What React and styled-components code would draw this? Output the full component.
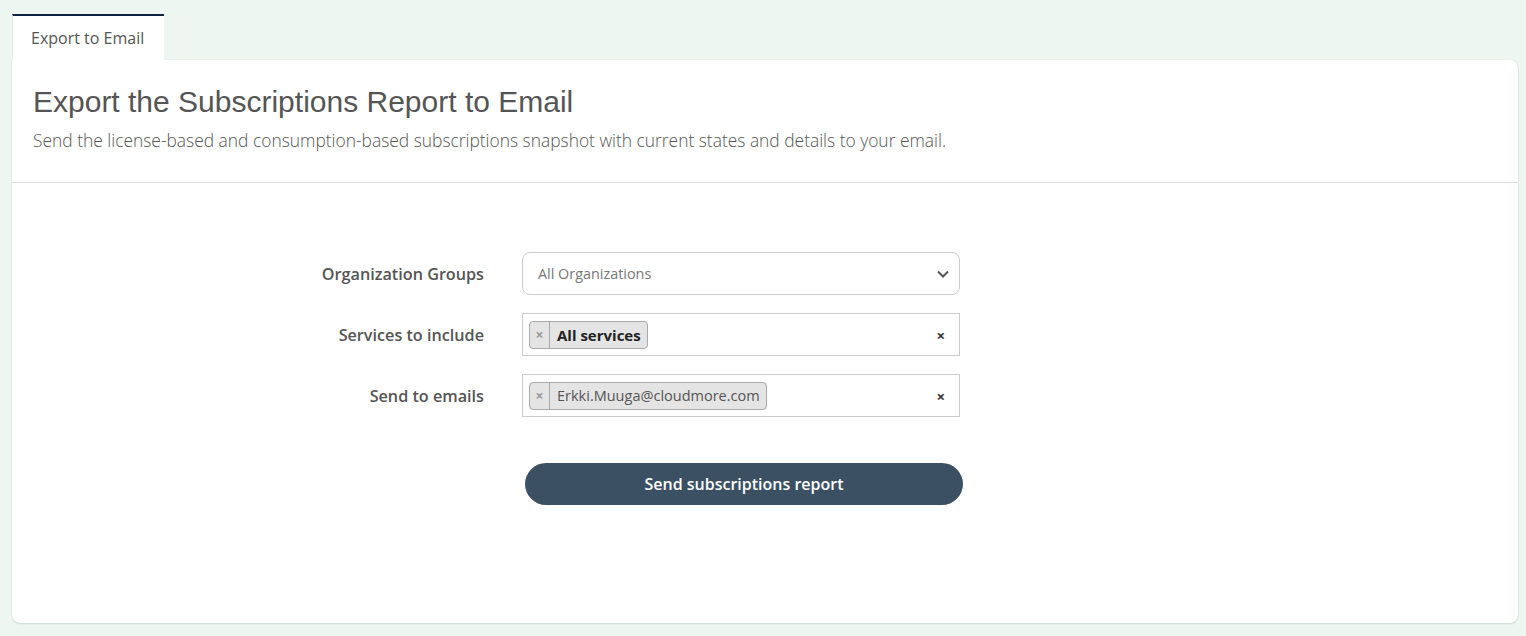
import React from 'react';
import styled, {createGlobalStyle} from 'styled-components';

const GlobalStyle = createGlobalStyle`
  html, body {
    margin: 0;
    padding: 0;
    background: #eef6f2;
    font-family: "Open Sans", "Liberation Sans", sans-serif;
    color: #555;
  }
`;

const Page = styled.div`
  padding: 14px 8px 12px 12px;
`;

const TabBar = styled.div`
  display: flex;
`;

const Tab = styled.div`
  background: #fff;
  border-top: 2px solid #0f2340;
  border-left: 1px solid #eee;
  padding: 11px 20px 11px 18px;
  font-size: 16px;
  line-height: 22px;
  color: #555;
`;

const Card = styled.div`
  background: #fff;
  border-radius: 0 8px 8px 8px;
  box-shadow: 0 1px 2px rgba(0, 0, 0, 0.12), 0 0 1px rgba(0, 0, 0, 0.12);
  height: 563px;
  display: flex;
  flex-direction: column;
`;

const Header = styled.div`
  padding: 24px 21px 30px;
  border-bottom: 1px solid #ddd;
`;

const Title = styled.h1`
  margin: 0;
  font-family: "Liberation Sans", Arial, sans-serif;
  font-weight: 400;
  font-size: 30px;
  line-height: 36px;
  color: #555;
`;

const Subtitle = styled.p`
  margin: 8px 0 0;
  font-weight: 300;
  font-size: 17.4px;
  line-height: 24px;
  color: #555;
`;

const Form = styled.div`
  padding-top: 69px;
  display: grid;
  grid-template-columns: 472px 438px;
  column-gap: 38px;
  row-gap: 18px;
  align-items: center;
`;

const Label = styled.label`
  text-align: right;
  font-weight: 600;
  font-size: 16.2px;
  color: #555;
`;

const Select = styled.div`
  height: 43px;
  box-sizing: border-box;
  border: 1px solid #ccc;
  border-radius: 8px;
  display: flex;
  align-items: center;
  justify-content: space-between;
  padding: 0 9px 0 15px;
  font-size: 14.4px;
  color: #777;
`;

const MultiBox = styled.div`
  height: 43px;
  box-sizing: border-box;
  border: 1px solid #ccc;
  display: flex;
  align-items: center;
  padding: 0 14px 0 6px;
`;

const Tag = styled.span`
  display: inline-flex;
  align-items: stretch;
  height: 28px;
  box-sizing: border-box;
  background: #e4e4e4;
  border: 1px solid #aaa;
  border-radius: 4px;
`;

const TagRemove = styled.span`
  width: 19px;
  border-right: 1px solid #aaa;
  display: flex;
  align-items: center;
  justify-content: center;
  color: #999;
  font-size: 14px;
  font-weight: 700;
`;

const TagText = styled.span`
  display: flex;
  align-items: center;
  padding: 0 6px 0 7px;
  font-size: ${p => (p.$bold ? '15px' : '14.5px')};
  font-weight: ${p => (p.$bold ? 700 : 400)};
  color: ${p => (p.$bold ? '#222' : '#555')};
`;

const ClearAll = styled.span`
  margin-left: auto;
  font-size: 15px;
  font-weight: 700;
  color: #333;
`;

const SubmitButton = styled.button`
  grid-column: 2;
  justify-self: start;
  width: 438px;
  margin: 28px 0 0 3px;
  height: 42px;
  border: none;
  border-radius: 21px;
  background: #3c5064;
  color: #fff;
  font-family: "Open Sans", "Liberation Sans", sans-serif;
  font-weight: 600;
  font-size: 16px;
  cursor: pointer;
`;

const Chevron = () => (
  <svg width="14" height="14" viewBox="0 0 14 14">
    <path d="M2 4.5 L7 9.5 L12 4.5" fill="none" stroke="#555" strokeWidth="2" />
  </svg>
);

const App = () => (
  <>
    <GlobalStyle />
    <Page>
      <TabBar>
        <Tab>Export to Email</Tab>
      </TabBar>
      <Card>
        <Header>
          <Title>Export the Subscriptions Report to Email</Title>
          <Subtitle>
            Send the license-based and consumption-based subscriptions snapshot with current
            states and details to your email.
          </Subtitle>
        </Header>
        <Form>
          <Label>Organization Groups</Label>
          <Select>
            <span>All Organizations</span>
            <Chevron />
          </Select>

          <Label>Services to include</Label>
          <MultiBox>
            <Tag>
              <TagRemove>×</TagRemove>
              <TagText $bold>All services</TagText>
            </Tag>
            <ClearAll>×</ClearAll>
          </MultiBox>

          <Label>Send to emails</Label>
          <MultiBox>
            <Tag>
              <TagRemove>×</TagRemove>
              <TagText>Erkki.Muuga@cloudmore.com</TagText>
            </Tag>
            <ClearAll>×</ClearAll>
          </MultiBox>

          <SubmitButton>Send subscriptions report</SubmitButton>
        </Form>
      </Card>
    </Page>
  </>
);

export default App;
